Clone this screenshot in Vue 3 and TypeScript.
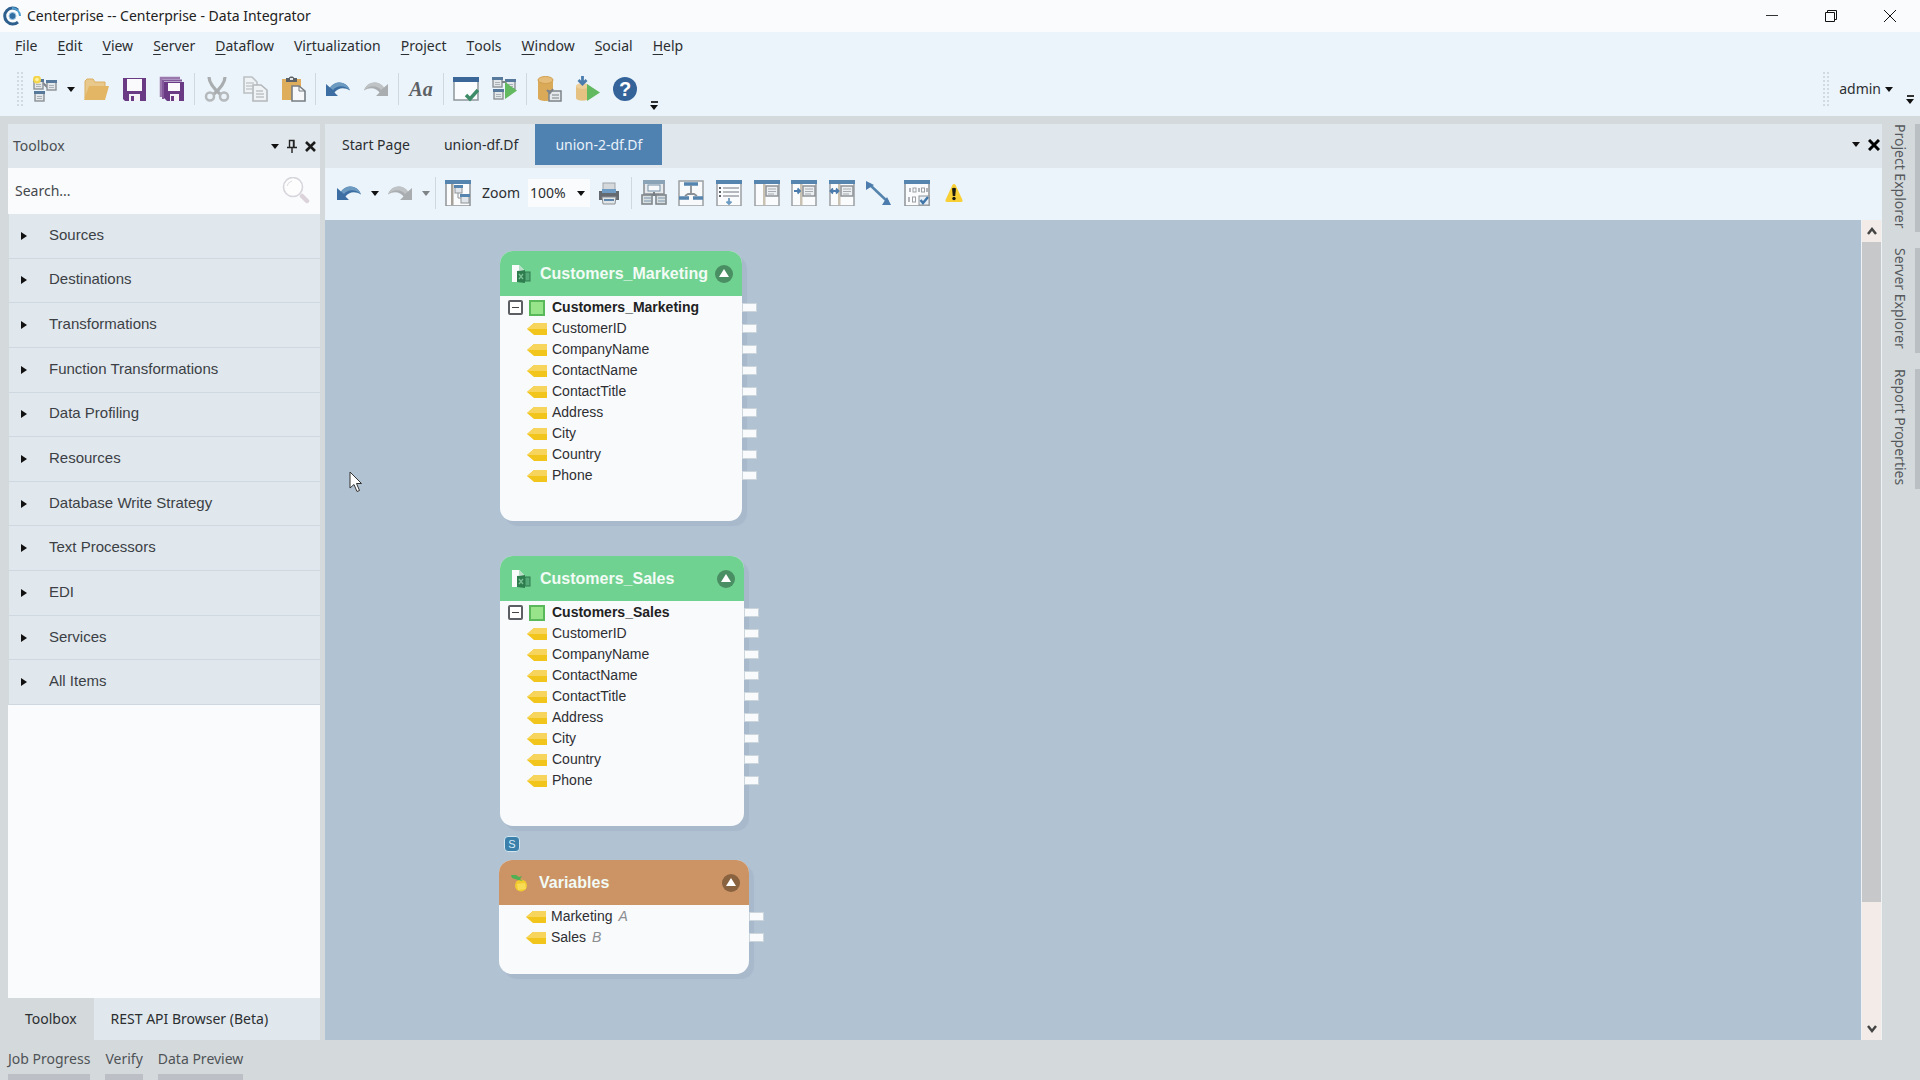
<script setup lang="ts">
import { ref } from 'vue'

interface Tool {
  id: string
  label: string
}

interface DiagramNode {
  title: string
  kind: 'source' | 'variables'
  x: number
  y: number
  width: number
  height: number
  root?: string
  fields: { name: string; value?: string }[]
}

const menus = [
  { pre: '', key: 'F', post: 'ile' },
  { pre: '', key: 'E', post: 'dit' },
  { pre: '', key: 'V', post: 'iew' },
  { pre: '', key: 'S', post: 'erver' },
  { pre: '', key: 'D', post: 'ataflow' },
  { pre: 'Vi', key: 'r', post: 'tualization' },
  { pre: '', key: 'P', post: 'roject' },
  { pre: '', key: 'T', post: 'ools' },
  { pre: '', key: 'W', post: 'indow' },
  { pre: '', key: 'S', post: 'ocial' },
  { pre: '', key: 'H', post: 'elp' },
]

const undoArrow =
  '<path d="M1 8V20H13L9.500 16.500C12.500 12 19 10.500 25 14.500C22 5.500 11 3.500 5 11.500Z" fill="#3d6ea3"/><path d="M5 11.500C11 3.500 22 5.500 25 14.500C20 9 12 9 8 14Z" fill="#6c9ac0"/>'
const redoArrow =
  '<path d="M25 8V20H13L16.500 16.500C13.500 12 7 10.500 1 14.500C4 5.500 15 3.500 21 11.500Z" fill="#a9adb0"/><path d="M21 11.500C15 3.500 4 5.500 1 14.500C6 9 14 9 18 14Z" fill="#bfc3c5"/>'
const frame =
  '<rect x="1" y="1" width="24" height="25" fill="#fafbfc" stroke="#9a9fa3" stroke-width="1.500"/><rect x="0" y="0" width="26" height="4" fill="#5585af"/>'
const splitPane = `${frame}<rect x="9" y="4" width="2.500" height="21" fill="#c9c2b2"/><rect x="12" y="6" width="12" height="10" fill="#eceff1" stroke="#8e9397" stroke-width="1.500"/><path d="M14 9H22M14 11.500H22M14 14H20" stroke="#a7abb0"/>`
const smallBox = (x: number, y: number) =>
  `<rect x="${x}" y="${y}" width="9" height="9" fill="#e3e7ea" stroke="#8b9196" stroke-width="1.400"/><rect x="${x - 1}" y="${y - 1}" width="11" height="3" fill="#56799c"/><path d="M${x + 2} ${y + 4.5}H${x + 7}M${x + 2} ${y + 6.5}H${x + 7}" stroke="#aab2b9"/>`

const icons: Record<string, string> = {
  new: `<path d="M9 5L15 11H17" stroke="#7c848a" stroke-width="2" fill="none"/>${smallBox(2, 4)}${smallBox(15, 5)}${smallBox(3, 16)}<circle cx="5" cy="3.500" r="4" fill="#f2d54d"/><circle cx="5" cy="3.500" r="1.800" fill="#fff3a0"/>`,
  open: '<path d="M2 22V5L4 3H10L12 6H22V11H8Z" fill="#e8c98b" stroke="#dcae60"/><path d="M1 24L6 10H26L22 24Z" fill="#e2b665"/>',
  save: '<path d="M2 2H25V25H4L2 23Z" fill="#6b3a85"/><rect x="6" y="3" width="15" height="12" fill="#fafafc"/><rect x="8" y="18" width="11" height="7" fill="#f4f1f7"/><rect x="10" y="20" width="3" height="5" fill="#6b3a85"/>',
  saveall: '<path d="M2 21V2H21" fill="none" stroke="#9a78ae" stroke-width="2.500"/><path d="M4 23V4.500H23" fill="none" stroke="#83589b" stroke-width="2"/><path d="M5 6H25V25H8L5 22Z" fill="#6b3a85"/><rect x="9" y="7" width="12" height="8" fill="#fafafc"/><rect x="11" y="18" width="9" height="7" fill="#f4f1f7"/><rect x="12" y="20" width="3" height="5" fill="#6b3a85"/>',
  cut: '<path d="M5 1C5 5 8 11 17 19M21 1C21 5 18 11 9 19" stroke="#a9adb0" stroke-width="3.200" fill="none"/><circle cx="6" cy="20.500" r="4" fill="none" stroke="#b5b9bc" stroke-width="2.500"/><circle cx="20" cy="20.500" r="4" fill="none" stroke="#b5b9bc" stroke-width="2.500"/>',
  copy: '<path d="M2 1H10L15 6V17H2Z" fill="#f0f3f5" stroke="#bcc1c4" stroke-width="1.600"/><path d="M4 7H12M4 10H10M4 13H10" stroke="#c6cacd" stroke-width="1.500"/><path d="M11 9H19L25 14V25H11Z" fill="#f0f3f5" stroke="#b2b7ba" stroke-width="1.600"/><path d="M14 15H21M14 18H22M14 21H22" stroke="#bfc3c6" stroke-width="1.500"/>',
  paste: '<rect x="2" y="3" width="19" height="21" fill="#dfae5c"/><path d="M6 2H9C9 0 14 0 14 2H17V6H6Z" fill="#5c6166"/><rect x="10" y="2" width="3" height="2" fill="#dfe3e6"/><path d="M12 10H19L25 15V25H12Z" fill="#f7f8f9" stroke="#777d82" stroke-width="1.600"/><path d="M19 10V15H25" fill="none" stroke="#777d82"/>',
  undo: undoArrow,
  redo: redoArrow,
  verify: '<rect x="1" y="2" width="24" height="22" fill="#fbfcfd" stroke="#8f969b" stroke-width="1.500"/><rect x="0" y="1" width="26" height="5" fill="#3a6798"/><path d="M13 19L17 23L25 14" fill="none" stroke="#3d8c67" stroke-width="3.500"/>',
  run: `${smallBox(2, 2)}${smallBox(15, 4)}${smallBox(3, 14)}<path d="M11 6H15" stroke="#7c848a" stroke-width="2"/><path d="M14 6L26 14.500L14 23Z" fill="#62b95f"/>`,
  database: '<path d="M2 4V22C2 26 17 26 17 22V4" fill="#dbaa58"/><ellipse cx="9.500" cy="4" rx="7.500" ry="3.500" fill="#e6bd78" stroke="#d09f4e"/><rect x="13" y="15" width="12" height="10" fill="#e6e9eb" stroke="#7d8388" stroke-width="1.500"/><path d="M11 14L14 17L17 13" stroke="#7d8388" stroke-width="2" fill="none"/><path d="M16 19H23M16 22H23" stroke="#9da3a8" stroke-width="1.500"/>',
  dbrun: '<path d="M2 10V22C2 25.500 15 25.500 15 22V10" fill="#e5c182"/><ellipse cx="8.500" cy="10" rx="6.500" ry="3" fill="#edcf9a"/><path d="M8.500 0V8M4.500 4L8.500 8L12.500 4" fill="none" stroke="#4b7cad" stroke-width="2.800"/><path d="M13 8L26 16.500L13 25Z" fill="#62b95f"/>',
  layout: '<rect x="1" y="1" width="24" height="25" fill="#fafbfc" stroke="#8e9397" stroke-width="1.500"/><rect x="0" y="0" width="26" height="4" fill="#5585af"/><rect x="6" y="4" width="2.500" height="21" fill="#a5a199"/><rect x="10" y="6" width="7" height="7" fill="#dfe5ea" stroke="#8e9397"/><rect x="9" y="5" width="9" height="3" fill="#5585af"/><path d="M13 13V18H17" fill="none" stroke="#8e9397"/><rect x="16" y="15" width="8" height="8" fill="#dfe5ea" stroke="#8e9397"/><rect x="15" y="14" width="10" height="3" fill="#5585af"/>',
  print: '<rect x="7" y="3" width="12" height="7" fill="#d5d9dc" stroke="#a0a5a9"/><path d="M3 11H6V13H20V11H23V20H3Z" fill="#646a70"/><rect x="6" y="9" width="14" height="4" fill="#6e9cc4"/><path d="M6 17H20L19 24H7Z" fill="#e2e5e8" stroke="#8b9095"/><path d="M8 20H18" stroke="#5f87ac" stroke-width="2"/>',
  collapse: '<rect x="3" y="1" width="20" height="13" fill="#e8ebed" stroke="#8d9296" stroke-width="1.600"/><rect x="2" y="0" width="22" height="4" fill="#8aa3b7"/><rect x="7" y="5" width="12" height="6" fill="#f7f8f9" stroke="#7490a8"/><path d="M13 12V15M8 15H18" stroke="#777e84" stroke-width="2"/><rect x="1" y="15" width="10" height="9" fill="#d9dee1" stroke="#80878c" stroke-width="1.600"/><rect x="15" y="15" width="10" height="9" fill="#d9dee1" stroke="#80878c" stroke-width="1.600"/><path d="M3 18H10M3 21H10M17 18H24M17 21H24" stroke="#7b96ae"/>',
  expand: '<rect x="1" y="1" width="24" height="25" fill="#f7f9fa" stroke="#9a9fa3" stroke-width="1.500"/><path d="M6 4H20M1 18H11M15 18H25" stroke="#5585af" stroke-width="3.500"/><path d="M13 5V14M7 16L10 14H16L19 16" fill="none" stroke="#8a9096" stroke-width="1.800"/>',
  list: `${frame}<path d="M3 8H5M3 12H5M3 16H5" stroke="#5d6368" stroke-width="2"/><path d="M7 8H23M7 12H23M7 16H23" stroke="#9ea3a7" stroke-width="1.600"/><path d="M13 18V24M10.500 21.500L13 24L15.500 21.500" stroke="#6c9ac0" stroke-width="1.800" fill="none"/>`,
  pane: splitPane,
  paneRight: `${splitPane}<path d="M3 11H9M6.500 8.500L9 11L6.500 13.500" stroke="#4b7cad" stroke-width="1.800" fill="none"/>`,
  paneBoth: `${splitPane}<path d="M1 11H10M4 8.500L1.500 11L4 13.500M7 8.500L9.500 11L7 13.500" stroke="#4b7cad" stroke-width="1.800" fill="none"/>`,
  link: '<path d="M3 4L22 22" stroke="#5483ad" stroke-width="2.500"/><path d="M0 1V10L8 5Z M25 25L16 25L21 17Z" fill="#4b7cad"/>',
  preview: '<rect x="1" y="1" width="24" height="25" fill="#fafbfc" stroke="#8e9397" stroke-width="1.500"/><rect x="0" y="0" width="26" height="4" fill="#5585af"/><path d="M6 8V12M15 8V12M23 8V12M5 17V22" stroke="#9b9fa3" stroke-width="1.500"/><rect x="9" y="8" width="3" height="4" fill="none" stroke="#9b9fa3"/><rect x="17.500" y="8" width="3" height="4" fill="none" stroke="#9b9fa3"/><rect x="8.500" y="17" width="3" height="5" fill="none" stroke="#9b9fa3"/><rect x="15" y="16" width="10" height="9" fill="#e8f0f7" stroke="#8e9397"/><path d="M16.500 20L19 23L24 17" stroke="#3f75a8" stroke-width="2.500" fill="none"/>',
  warning: '<path d="M13 4Q14 4 14.600 5L21.500 20Q22 22 20 22H6Q4 22 4.500 20L11.400 5Q12 4 13 4Z" fill="#f8cf35"/><path d="M11 8.500Q13 7 15 8.500L14.200 16H11.800Z" fill="#1b1a12"/><circle cx="13" cy="18.500" r="1.700" fill="#1b1a12"/>',
}

const toolGroups: Tool[][] = [
  [
    { id: 'open', label: 'Open' },
    { id: 'save', label: 'Save' },
    { id: 'saveall', label: 'Save all' },
  ],
  [
    { id: 'cut', label: 'Cut' },
    { id: 'copy', label: 'Copy' },
    { id: 'paste', label: 'Paste' },
  ],
  [
    { id: 'undo', label: 'Undo' },
    { id: 'redo', label: 'Redo' },
  ],
  [{ id: 'font', label: 'Font' }],
  [
    { id: 'verify', label: 'Verify' },
    { id: 'run', label: 'Run dataflow' },
  ],
  [
    { id: 'database', label: 'Database' },
    { id: 'dbrun', label: 'Load and run' },
    { id: 'help', label: 'Help' },
  ],
]

const flowTools: Tool[] = [
  { id: 'collapse', label: 'Collapse all' },
  { id: 'expand', label: 'Expand all' },
  { id: 'list', label: 'Auto size' },
  { id: 'pane', label: 'Pane' },
  { id: 'paneRight', label: 'Expand pane' },
  { id: 'paneBoth', label: 'Resize pane' },
  { id: 'link', label: 'Link' },
  { id: 'preview', label: 'Preview data' },
  { id: 'warning', label: 'Warnings' },
]

const categories = [
  'Sources',
  'Destinations',
  'Transformations',
  'Function Transformations',
  'Data Profiling',
  'Resources',
  'Database Write Strategy',
  'Text Processors',
  'EDI',
  'Services',
  'All Items',
]

const tabs = ['Start Page', 'union-df.Df', 'union-2-df.Df']
const activeTab = ref('union-2-df.Df')
const sideTabs = ['Project Explorer', 'Server Explorer', 'Report Properties']
const bottomTabs = ['Job Progress', 'Verify', 'Data Preview']
const search = ref('')
const zoom = ref('100%')

const customerFields = [
  'CustomerID',
  'CompanyName',
  'ContactName',
  'ContactTitle',
  'Address',
  'City',
  'Country',
  'Phone',
].map((name) => ({ name }))

const nodes: DiagramNode[] = [
  { title: 'Customers_Marketing', kind: 'source', x: 175, y: 31, width: 242, height: 270, root: 'Customers_Marketing', fields: customerFields },
  { title: 'Customers_Sales', kind: 'source', x: 175, y: 336, width: 244, height: 270, root: 'Customers_Sales', fields: customerFields },
  {
    title: 'Variables',
    kind: 'variables',
    x: 174,
    y: 640,
    width: 250,
    height: 114,
    fields: [
      { name: 'Marketing', value: 'A' },
      { name: 'Sales', value: 'B' },
    ],
  },
]
</script>

<template>
  <div class="app">
    <header class="titlebar">
      <svg width="20" height="20" viewBox="0 0 20 20" aria-hidden="true">
        <path d="M16 4A8 8 0 1 0 16 16" fill="none" stroke="#2c5f8e" stroke-width="3" />
        <path d="M10 2A8 8 0 0 1 18 10" fill="none" stroke="#4c9fd0" stroke-width="2" />
        <circle cx="10.500" cy="10" r="3.500" fill="#2f6da3" stroke="#9cc4de" />
      </svg>
      <h1>Centerprise -- Centerprise - Data Integrator</h1>
      <div class="window-buttons">
        <button type="button" aria-label="Minimize">
          <svg width="14" height="14" viewBox="0 0 14 14"><path d="M1 6.500H13" stroke="#333" /></svg>
        </button>
        <button type="button" aria-label="Restore">
          <svg width="14" height="14" viewBox="0 0 14 14">
            <path d="M1.500 3.500H10.500V12.500H1.500ZM3.500 3V1.500H12.500V10.500H11" fill="none" stroke="#111" />
          </svg>
        </button>
        <button type="button" aria-label="Close">
          <svg width="14" height="14" viewBox="0 0 14 14"><path d="M1 1L13 13M13 1L1 13" stroke="#111" /></svg>
        </button>
      </div>
    </header>

    <nav class="menubar">
      <button v-for="m in menus" :key="m.pre + m.key + m.post" type="button">{{ m.pre }}<u>{{ m.key }}</u>{{ m.post }}</button>
    </nav>

    <div class="toolbar">
      <span class="grip"></span>
      <button type="button" class="tool" aria-label="New">
        <svg width="26" height="26" viewBox="0 0 26 26" v-html="icons.new"></svg>
      </button>
      <button type="button" class="drop" aria-label="New options"><i class="caret"></i></button>
      <template v-for="(group, g) in toolGroups" :key="g">
        <span v-if="g > 0" class="sep"></span>
        <button v-for="t in group" :key="t.id" type="button" class="tool" :aria-label="t.label">
          <span v-if="t.id === 'font'" class="font-glyph">Aa</span>
          <span v-else-if="t.id === 'help'" class="help-glyph">?</span>
          <svg v-else width="26" height="26" viewBox="0 0 26 26" v-html="icons[t.id]"></svg>
        </button>
      </template>
      <button type="button" class="overflow" aria-label="Toolbar options"><i class="caret"></i></button>
      <div class="account">
        <span class="grip"></span>
        <button type="button" class="admin">admin<i class="caret"></i></button>
        <button type="button" class="overflow" aria-label="Account options"><i class="caret"></i></button>
      </div>
    </div>

    <div class="workspace">
      <aside class="toolbox">
        <div class="panel-head">
          <h2>Toolbox</h2>
          <button type="button" aria-label="Panel menu"><i class="caret"></i></button>
          <button type="button" aria-label="Pin">
            <svg width="10" height="14" viewBox="0 0 10 14">
              <path d="M2.500 8V1.500H7V8M6.500 1V8M0 8.500H10M5 9V14" fill="none" stroke="#222" stroke-width="1.400" />
            </svg>
          </button>
          <button type="button" aria-label="Close panel">
            <svg width="11" height="11" viewBox="0 0 11 11"><path d="M1 1L10 10M10 1L1 10" stroke="#1c1c1c" stroke-width="2.600" /></svg>
          </button>
        </div>
        <label class="search">
          <input v-model="search" type="text" placeholder="Search..." aria-label="Search toolbox" />
          <svg width="28" height="28" viewBox="0 0 28 28">
            <circle cx="11" cy="10" r="9.500" fill="#fdfdfd" stroke="#d6d5dc" stroke-width="1.600" />
            <path d="M5 9Q6 5 10 4" fill="none" stroke="#dcdce2" />
            <path d="M20 19L25 24" stroke="#dcd3da" stroke-width="4.500" stroke-linecap="round" />
          </svg>
        </label>
        <ul class="categories">
          <li v-for="c in categories" :key="c">
            <button type="button"><i class="expander"></i>{{ c }}</button>
          </li>
        </ul>
        <div class="toolbox-space"></div>
        <div class="toolbox-tabs">
          <button type="button" class="current">Toolbox</button>
          <button type="button">REST API Browser (Beta)</button>
        </div>
      </aside>

      <main class="document">
        <div class="tabs">
          <button v-for="t in tabs" :key="t" type="button" :class="{ active: t === activeTab }" @click="activeTab = t">{{ t }}</button>
          <div class="tab-actions">
            <button type="button" aria-label="Open documents"><i class="caret"></i></button>
            <button type="button" aria-label="Close document">
              <svg width="12" height="12" viewBox="0 0 12 12"><path d="M1 1L11 11M11 1L1 11" stroke="#000" stroke-width="3" /></svg>
            </button>
          </div>
        </div>

        <div class="flowbar">
          <button type="button" class="tool" aria-label="Undo">
            <svg width="26" height="26" viewBox="0 0 26 26" v-html="icons.undo"></svg>
          </button>
          <button type="button" class="drop" aria-label="Undo history"><i class="caret"></i></button>
          <button type="button" class="tool" aria-label="Redo">
            <svg width="26" height="26" viewBox="0 0 26 26" v-html="icons.redo"></svg>
          </button>
          <button type="button" class="drop faded" aria-label="Redo history"><i class="caret"></i></button>
          <span class="sep"></span>
          <button type="button" class="tool" aria-label="Layout">
            <svg width="26" height="26" viewBox="0 0 26 26" v-html="icons.layout"></svg>
          </button>
          <label for="zoom" class="zoom-label">Zoom</label>
          <span class="zoom">
            <select id="zoom" v-model="zoom">
              <option>50%</option>
              <option>100%</option>
              <option>200%</option>
            </select>
            <i class="caret"></i>
          </span>
          <button type="button" class="tool" aria-label="Print">
            <svg width="26" height="26" viewBox="0 0 26 26" v-html="icons.print"></svg>
          </button>
          <span class="sep"></span>
          <div class="flow-tools">
            <button v-for="t in flowTools" :key="t.id" type="button" :aria-label="t.label">
              <svg width="26" height="26" viewBox="0 0 26 26" v-html="icons[t.id]"></svg>
            </button>
          </div>
        </div>

        <div class="stage">
          <div class="canvas">
            <section
              v-for="n in nodes"
              :key="n.title"
              class="node"
              :class="n.kind"
              :style="{ left: n.x + 'px', top: n.y + 'px', width: n.width + 'px', height: n.height + 'px' }"
            >
              <header>
                <svg v-if="n.kind === 'source'" width="20" height="20" viewBox="0 0 20 20">
                  <path d="M1 1H8L13 6V18H1Z" fill="#fafcfb" />
                  <path d="M8 1V6H13" fill="#b9dfc8" />
                  <path d="M6 7L14 6V19L6 18Z" fill="#2e7d4f" />
                  <rect x="14" y="8" width="5" height="9" fill="#55a878" stroke="#2e7d4f" />
                  <path d="M8 10L12 15M12 10L8 15" stroke="#7cc096" stroke-width="1.300" />
                </svg>
                <svg v-else width="20" height="20" viewBox="0 0 20 20">
                  <circle cx="11" cy="12.500" r="6" fill="#f3cb2e" />
                  <path d="M7 11L15 10L16 16L8 17Z" fill="#f8dc55" />
                  <path d="M1 2H6L9 4L12 3L10 6L13 8L8 7L2 5Z" fill="#4fb054" />
                </svg>
                <h3>{{ n.title }}</h3>
                <button type="button" aria-label="Collapse">
                  <svg width="10" height="9" viewBox="0 0 10 9"><path d="M5 0L10 8H0Z" fill="#fff" /></svg>
                </button>
              </header>
              <ul>
                <li v-if="n.root" class="root">
                  <button type="button" class="minus" aria-label="Collapse fields"></button>
                  <span class="record"></span>
                  {{ n.root }}
                  <span class="port"></span>
                </li>
                <li v-for="f in n.fields" :key="f.name">
                  <svg width="20" height="14" viewBox="0 0 20 14">
                    <path d="M0 7L7 1H20V13H7Z" fill="#f2c51d" />
                    <path d="M0 7L7 1H20V7Z" fill="#f7d45c" />
                  </svg>
                  {{ f.name }}<em v-if="f.value">{{ f.value }}</em>
                  <span class="port"></span>
                </li>
              </ul>
            </section>
            <span class="badge">S</span>
            <svg class="pointer" width="14" height="22" viewBox="0 0 14 22">
              <path d="M1 1V17L5 13.500L8 20.500L10.500 19.500L7.500 12.500H12.500Z" fill="#fff" stroke="#333" />
            </svg>
          </div>
          <div class="scrollbar">
            <button type="button" aria-label="Scroll up">
              <svg width="12" height="8" viewBox="0 0 12 8"><path d="M2 7L6 2L10 7" fill="none" stroke="#444" stroke-width="2.500" /></svg>
            </button>
            <div class="track"><div class="thumb"></div></div>
            <button type="button" aria-label="Scroll down">
              <svg width="12" height="8" viewBox="0 0 12 8"><path d="M2 1L6 6L10 1" fill="none" stroke="#444" stroke-width="2.500" /></svg>
            </button>
          </div>
        </div>
      </main>

      <nav class="side-tabs">
        <button v-for="s in sideTabs" :key="s" type="button">{{ s }}</button>
      </nav>
    </div>

    <footer class="bottom-tabs">
      <button v-for="b in bottomTabs" :key="b" type="button">{{ b }}</button>
    </footer>
  </div>
</template>

<style>
body {
  margin: 0;
  background: #d4d9dc;
}
</style>

<style scoped>
.app {
  min-height: 100vh;
  display: flex;
  flex-direction: column;
  background: #d4d9dc;
  color: #2b2e31;
  font: 14px/20px 'Noto Sans', 'Open Sans', sans-serif;
}
button {
  border: 0;
  padding: 0;
  margin: 0;
  background: none;
  color: inherit;
  font: inherit;
  display: flex;
  align-items: center;
  justify-content: center;
  white-space: pre;
}
h1,
h2,
h3,
ul {
  margin: 0;
  padding: 0;
  font: inherit;
  list-style: none;
}
svg {
  display: block;
  flex: none;
}
.caret {
  flex: none;
  border: 4px solid transparent;
  border-top: 5px solid #111;
  border-bottom: 0;
}

.titlebar {
  display: flex;
  align-items: center;
  height: 32px;
  padding-left: 2px;
  background: #fafbfc;
}
.titlebar h1 {
  margin-left: 5px;
  color: #222;
}
.window-buttons {
  display: flex;
  margin: 0 1px 0 auto;
}
.window-buttons button {
  width: 59px;
  height: 30px;
}

.menubar {
  display: flex;
  gap: 20px;
  height: 28px;
  padding-left: 15px;
  background: #ebf4fa;
}
.menubar u {
  text-underline-offset: 3px;
}

.toolbar {
  display: flex;
  align-items: center;
  height: 56px;
  padding: 2px 0 0 16px;
  box-sizing: border-box;
  background: #ebf4fa;
}
.grip {
  width: 8px;
  height: 36px;
  background: radial-gradient(circle, #d3dadf 1px, transparent 1px) 0 0 / 4px 4px;
}
.tool {
  width: 38px;
  height: 32px;
}
.drop {
  width: 13px;
  height: 32px;
}
.toolbar > .grip + .tool {
  margin-left: 2px;
}
.sep {
  width: 1px;
  height: 32px;
  margin: 0 3px;
  background: #cfd8de;
}
.font-glyph {
  font: italic bold 20px/26px 'Liberation Serif', serif;
  color: #5d6165;
}
.help-glyph {
  width: 24px;
  height: 24px;
  border-radius: 12px;
  background: #34639a;
  color: #fff;
  font: bold 20px/24px 'Liberation Sans', sans-serif;
  text-align: center;
}
.overflow {
  align-self: flex-end;
  width: 10px;
  height: 10px;
  margin: 0 0 6px 5px;
  flex-direction: column;
  gap: 2px;
}
.overflow::before {
  content: '';
  width: 7px;
  height: 2px;
  background: #333;
}
.account {
  display: flex;
  align-items: center;
  align-self: stretch;
  margin-left: auto;
  padding-right: 5px;
}
.admin {
  margin-left: 9px;
  gap: 4px;
}
.account .overflow {
  margin: 0 0 12px 12px;
}

.workspace {
  flex: 1;
  display: flex;
  padding-top: 8px;
}
.toolbox {
  display: flex;
  flex-direction: column;
  width: 312px;
  margin: 0 5px 0 8px;
}
.panel-head {
  display: flex;
  align-items: center;
  gap: 8px;
  height: 44px;
  padding: 0 4px 0 5px;
  background: #e0e8ed;
}
.panel-head h2 {
  flex: 1;
  color: #4a4e52;
}
.search {
  display: flex;
  align-items: center;
  height: 46px;
  padding: 0 10px 0 7px;
  background: #fafbfc;
}
.search input {
  flex: 1;
  min-width: 0;
  border: 0;
  padding: 0;
  outline: 0;
  background: none;
  font: inherit;
  color: inherit;
}
.search input::placeholder {
  color: #44484c;
  opacity: 1;
}
.categories {
  display: flex;
  flex-direction: column;
  height: 491px;
  margin-left: 1px;
  background: #e0e8ee;
}
.categories li {
  flex: 1;
  display: flex;
  border-bottom: 1px solid #cfd8e0;
}
.categories button {
  flex: 1;
  justify-content: flex-start;
  padding-bottom: 2px;
  font: 15px/20px 'Liberation Sans', Arial, sans-serif;
  color: #3c4045;
}
.expander {
  margin: 2px 22px 0 12px;
  border: 4px solid transparent;
  border-left: 6px solid #111;
  border-right: 0;
}
.toolbox-space {
  flex: 1;
  background: #fafbfc;
}
.toolbox-tabs {
  display: flex;
  height: 42px;
  background: #e0e8ed;
}
.toolbox-tabs button {
  padding: 0 17px;
}
.toolbox-tabs .current {
  background: #d4d9dc;
}

.document {
  flex: 1;
  min-width: 0;
  display: flex;
  flex-direction: column;
}
.tabs {
  display: flex;
  height: 44px;
  padding-bottom: 3px;
  box-sizing: border-box;
  background: #e0e8ed;
}
.tabs > button {
  padding: 0 17px;
}
.tabs > .active {
  padding: 0 20px;
  background: #4f81b1;
  color: #e8f1f9;
}
.tab-actions {
  display: flex;
  gap: 8px;
  margin-left: auto;
  padding-right: 2px;
}
.flowbar {
  display: flex;
  align-items: center;
  height: 52px;
  padding: 0 0 2px 5px;
  box-sizing: border-box;
  background: #ebf4fa;
}
.faded {
  opacity: 0.5;
}
.zoom-label {
  margin: 0 8px 0 5px;
}
.zoom {
  position: relative;
  display: flex;
}
.zoom select {
  appearance: none;
  width: 62px;
  height: 28px;
  padding: 0 0 0 2px;
  border: 0;
  background: #fafbfc;
  color: inherit;
  font: inherit;
}
.zoom .caret {
  position: absolute;
  right: 5px;
  top: 12px;
  pointer-events: none;
}
.flow-tools {
  display: flex;
  width: 338px;
  height: 32px;
}
.flow-tools button {
  flex: 1;
}

.stage {
  flex: 1;
  display: flex;
}
.canvas {
  position: relative;
  flex: 1;
  min-height: 780px;
  background: #b1c2d3;
}
.node {
  position: absolute;
  box-sizing: border-box;
  border-radius: 13px;
  background: #f8fafc;
  box-shadow: 5px 5px 1px #a9b9cc;
  font: 14px/21px 'Liberation Sans', Arial, sans-serif;
  color: #2f2f33;
}
.node header {
  display: flex;
  align-items: center;
  height: 45px;
  margin-bottom: 1px;
  padding: 0 9px 0 11px;
  box-sizing: border-box;
  border-radius: 13px 13px 0 0;
  background: #70d290;
}
.node h3 {
  flex: 1;
  min-width: 0;
  margin-left: 9px;
  font-size: 16px;
  font-weight: bold;
  color: #f2fbf5;
}
.node header button {
  flex: none;
  width: 18px;
  height: 18px;
  border-radius: 9px;
  background: #4a8e63;
}
.variables header {
  background: #cc9465;
}
.variables header button {
  background: #89623f;
}
.node li {
  position: relative;
  display: flex;
  align-items: center;
  height: 21px;
  padding-left: 27px;
}
.node li svg {
  margin-right: 5px;
}
.node .root {
  padding-left: 8px;
  font-weight: bold;
  color: #222;
}
.minus {
  width: 15px;
  height: 15px;
  border: 2px solid #5b5f63;
  border-radius: 2px;
  background: #fff;
}
.minus::before {
  content: '';
  width: 7px;
  height: 1px;
  background: #444;
}
.record {
  width: 12px;
  height: 12px;
  margin: 0 7px 0 6px;
  border: 2px solid #59b85a;
  background: #98e48b;
}
.node em {
  margin-left: 6px;
  color: #8b8d90;
}
.port {
  position: absolute;
  left: 100%;
  box-sizing: border-box;
  width: 15px;
  height: 9px;
  border: 1px solid #ccd4dc;
  background: #f8fafc;
}
.badge {
  position: absolute;
  left: 179px;
  top: 616px;
  width: 14px;
  height: 14px;
  border: 1px solid #d3e5f0;
  border-radius: 4px;
  background: #3a80ab;
  color: #d9ecf7;
  font: 11px/14px 'Liberation Sans', Arial, sans-serif;
  text-align: center;
}
.pointer {
  position: absolute;
  left: 24px;
  top: 251px;
}
.scrollbar {
  display: flex;
  flex-direction: column;
  width: 19px;
  border: 0 solid #eef2f5;
  border-width: 0 1px;
  background: #f3ebe7;
}
.scrollbar button {
  height: 22px;
}
.track {
  flex: 1;
}
.thumb {
  height: 85%;
  background: #c6c8c9;
}

.side-tabs {
  display: flex;
  flex-direction: column;
  gap: 16px;
  width: 38px;
  align-items: flex-end;
}
.side-tabs button {
  writing-mode: vertical-rl;
  padding: 0 5px 4px 0;
  border-right: 5px solid #b9bfc3;
  color: #56595c;
}
.bottom-tabs {
  display: flex;
  gap: 15px;
  height: 40px;
  padding-left: 8px;
}
.bottom-tabs button {
  border-bottom: 6px solid #bcbfc6;
  padding-top: 4px;
  color: #4f5356;
}
</style>
